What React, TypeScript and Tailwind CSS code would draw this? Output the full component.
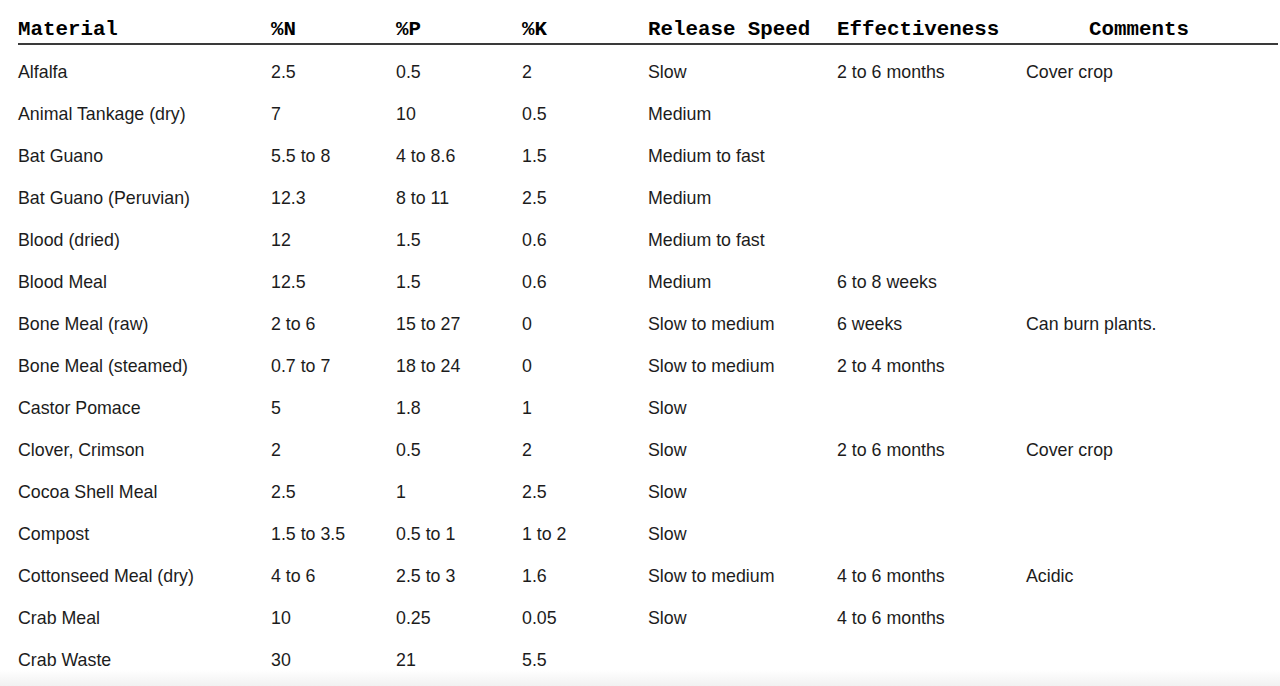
const columns = ["Material", "%N", "%P", "%K", "Release Speed", "Effectiveness", "Comments"];

const rows: string[][] = [
  ["Alfalfa", "2.5", "0.5", "2", "Slow", "2 to 6 months", "Cover crop"],
  ["Animal Tankage (dry)", "7", "10", "0.5", "Medium", "", ""],
  ["Bat Guano", "5.5 to 8", "4 to 8.6", "1.5", "Medium to fast", "", ""],
  ["Bat Guano (Peruvian)", "12.3", "8 to 11", "2.5", "Medium", "", ""],
  ["Blood (dried)", "12", "1.5", "0.6", "Medium to fast", "", ""],
  ["Blood Meal", "12.5", "1.5", "0.6", "Medium", "6 to 8 weeks", ""],
  ["Bone Meal (raw)", "2 to 6", "15 to 27", "0", "Slow to medium", "6 weeks", "Can burn plants."],
  ["Bone Meal (steamed)", "0.7 to 7", "18 to 24", "0", "Slow to medium", "2 to 4 months", ""],
  ["Castor Pomace", "5", "1.8", "1", "Slow", "", ""],
  ["Clover, Crimson", "2", "0.5", "2", "Slow", "2 to 6 months", "Cover crop"],
  ["Cocoa Shell Meal", "2.5", "1", "2.5", "Slow", "", ""],
  ["Compost", "1.5 to 3.5", "0.5 to 1", "1 to 2", "Slow", "", ""],
  ["Cottonseed Meal (dry)", "4 to 6", "2.5 to 3", "1.6", "Slow to medium", "4 to 6 months", "Acidic"],
  ["Crab Meal", "10", "0.25", "0.05", "Slow", "4 to 6 months", ""],
  ["Crab Waste", "30", "21", "5.5", "", "", ""],
];

const grid = "grid grid-cols-[253px_125px_126px_126px_189px_189px_1fr]";

export default function App() {
  return (
    <div className="relative h-[686px] overflow-hidden bg-white pl-[18px] pr-[2px] text-[#1c1c1c]">
      <div
        className={`${grid} h-[45px] items-end border-b-2 border-[#3a3a3a] pb-[1px] font-['Liberation_Mono','Courier_New',monospace] text-[20.8px] font-bold leading-[24px] text-black`}
      >
        {columns.map((c, i) => (
          <div key={c} className={i === 6 ? "pr-[26px] text-center" : ""}>
            {c}
          </div>
        ))}
      </div>

      <div className="mt-[6px] font-['Liberation_Sans',Arial,sans-serif] text-[17.8px]">
        {rows.map((r) => (
          <div key={r[0]} className={`${grid} h-[42px] items-center`}>
            {r.map((cell, i) => (
              <div key={i} className="whitespace-nowrap">
                {cell}
              </div>
            ))}
          </div>
        ))}
      </div>

      {/* bottom fade */}
      <div className="pointer-events-none absolute inset-x-0 bottom-0 h-[16px] bg-gradient-to-b from-white to-[#f1f1f1]" />
    </div>
  );
}
